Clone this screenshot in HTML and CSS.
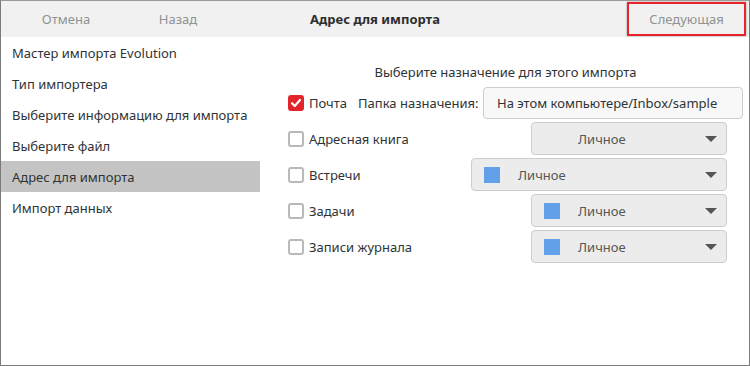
FILE: index.html
```html
<!DOCTYPE html>
<html lang="ru">
<head>
    <meta charset="UTF-8">
    <title>Адрес для импорта</title>
    <link rel="stylesheet" href="styles.css">
</head>
<body>
<div class="window">
    <div class="headerbar">
        <div class="header-left">
            <span class="hb-btn btn-cancel">Отмена</span>
            <span class="hb-btn btn-back">Назад</span>
        </div>
        <div class="header-title">Адрес для импорта</div>
        <div class="header-right">
            <span class="hb-btn btn-next">Следующая</span>
        </div>
    </div>

    <div class="main">
        <ul class="sidebar">
            <li>Мастер импорта Evolution</li>
            <li>Тип импортера</li>
            <li>Выберите информацию для импорта</li>
            <li>Выберите файл</li>
            <li class="selected">Адрес для импорта</li>
            <li>Импорт данных</li>
        </ul>

        <div class="content">
            <div class="content-title">Выберите назначение для этого импорта</div>

            <div class="rows">
                <div class="row">
                    <label class="check"><span class="box checked"><svg width="12" height="12" viewBox="0 0 12 12"><path d="M2 6.2 L4.8 9 L10 3" fill="none" stroke="#fff" stroke-width="2.2" stroke-linecap="round" stroke-linejoin="round"/></svg></span>Почта</label>
                    <span class="folder-label">Папка назначения:</span>
                    <div class="entry">На этом компьютере/Inbox/sample</div>
                </div>
                <div class="row">
                    <label class="check"><span class="box"></span>Адресная книга</label>
                    <div class="combo">
                        <span class="swatch empty"></span>
                        <span class="combo-text">Личное</span>
                        <span class="arrow"></span>
                    </div>
                </div>
                <div class="row">
                    <label class="check"><span class="box"></span>Встречи</label>
                    <div class="combo wide">
                        <span class="swatch"></span>
                        <span class="combo-text">Личное</span>
                        <span class="arrow"></span>
                    </div>
                </div>
                <div class="row">
                    <label class="check"><span class="box"></span>Задачи</label>
                    <div class="combo">
                        <span class="swatch"></span>
                        <span class="combo-text">Личное</span>
                        <span class="arrow"></span>
                    </div>
                </div>
                <div class="row">
                    <label class="check"><span class="box"></span>Записи журнала</label>
                    <div class="combo">
                        <span class="swatch"></span>
                        <span class="combo-text">Личное</span>
                        <span class="arrow"></span>
                    </div>
                </div>
            </div>
        </div>
    </div>
</div>
</body>
</html>
```

FILE: styles.css
```css
* {
    box-sizing: border-box;
}
body {
    margin: 0;
    font-family: 'Noto Sans', 'Open Sans', sans-serif;
    font-size: 13px;
    color: #2e3436;
    background: #fff;
}
.window {
    width: 750px;
    height: 366px;
    border: 1px solid #7b7b7b;
    border-top-color: #9a9a9a;
    display: flex;
    flex-direction: column;
    overflow: hidden;
}
.headerbar {
    height: 36px;
    flex-shrink: 0;
    background: #f1f1f1;
    display: grid;
    grid-template-columns: 1fr auto 1fr;
    align-items: center;
}
.header-left {
    display: flex;
    justify-self: start;
    padding-left: 5px;
}
.header-right {
    display: flex;
    justify-self: end;
    padding-right: 3px;
}
.hb-btn {
    color: #8f9393;
    text-align: center;
    line-height: 18px;
}
.btn-cancel {
    width: 120px;
}
.btn-back {
    width: 104px;
}
.btn-next {
    width: 119px;
    height: 34px;
    line-height: 30px;
    border: 2px solid #e8242a;
    box-shadow: 0 0 2px rgba(0, 0, 0, 0.35);
}
.header-title {
    font-weight: bold;
    color: #2e2e2e;
}
.main {
    flex: 1;
    display: flex;
}
.sidebar {
    list-style: none;
    margin: 0;
    padding: 0;
    width: 259px;
    flex-shrink: 0;
}
.sidebar li {
    height: 31px;
    line-height: 32px;
    padding-left: 11px;
}
.sidebar li.selected {
    background: #c4c4c4;
}
.content {
    flex: 1;
    padding-top: 26px;
}
.content-title {
    text-align: center;
    line-height: 18px;
    margin-bottom: 6px;
    padding-left: 2px;
}
.rows {
    display: flex;
    flex-direction: column;
    gap: 3px;
    padding-left: 28px;
    padding-right: 6px;
}
.row {
    height: 33px;
    display: flex;
    align-items: center;
    padding-right: 16px;
}
.row:first-child {
    height: 32px;
    padding-right: 0;
}
.check {
    display: flex;
    align-items: center;
    gap: 5px;
    margin-right: auto;
}
.row:first-child .check {
    margin-right: 0;
}
.box {
    width: 16px;
    height: 16px;
    border: 2px solid #b9b9b9;
    border-radius: 3px;
    background: #fff;
    display: flex;
    align-items: center;
    justify-content: center;
}
.box.checked {
    background: #e2252b;
    border-color: #e2252b;
}
.folder-label {
    margin-left: 11px;
    margin-right: auto;
}
.entry {
    width: 260px;
    height: 32px;
    line-height: 30px;
    border: 1px solid #cdcdcd;
    border-radius: 4px;
    background: #f8f8f8;
    padding-left: 13px;
    white-space: nowrap;
    overflow: hidden;
}
.combo {
    width: 196px;
    height: 33px;
    border: 1px solid #cdcdcd;
    border-radius: 4px;
    background: #ececec;
    display: flex;
    align-items: center;
    padding-left: 12px;
    padding-right: 9px;
    color: #555753;
}
.combo.wide {
    width: 256px;
}
.swatch {
    width: 16px;
    height: 16px;
    background: #62a0ea;
    margin-right: 18px;
}
.swatch.empty {
    background: transparent;
}
.combo-text {
    flex: 1;
}
.arrow {
    width: 0;
    height: 0;
    border-left: 6px solid transparent;
    border-right: 6px solid transparent;
    border-top: 6px solid #555;
}
```
